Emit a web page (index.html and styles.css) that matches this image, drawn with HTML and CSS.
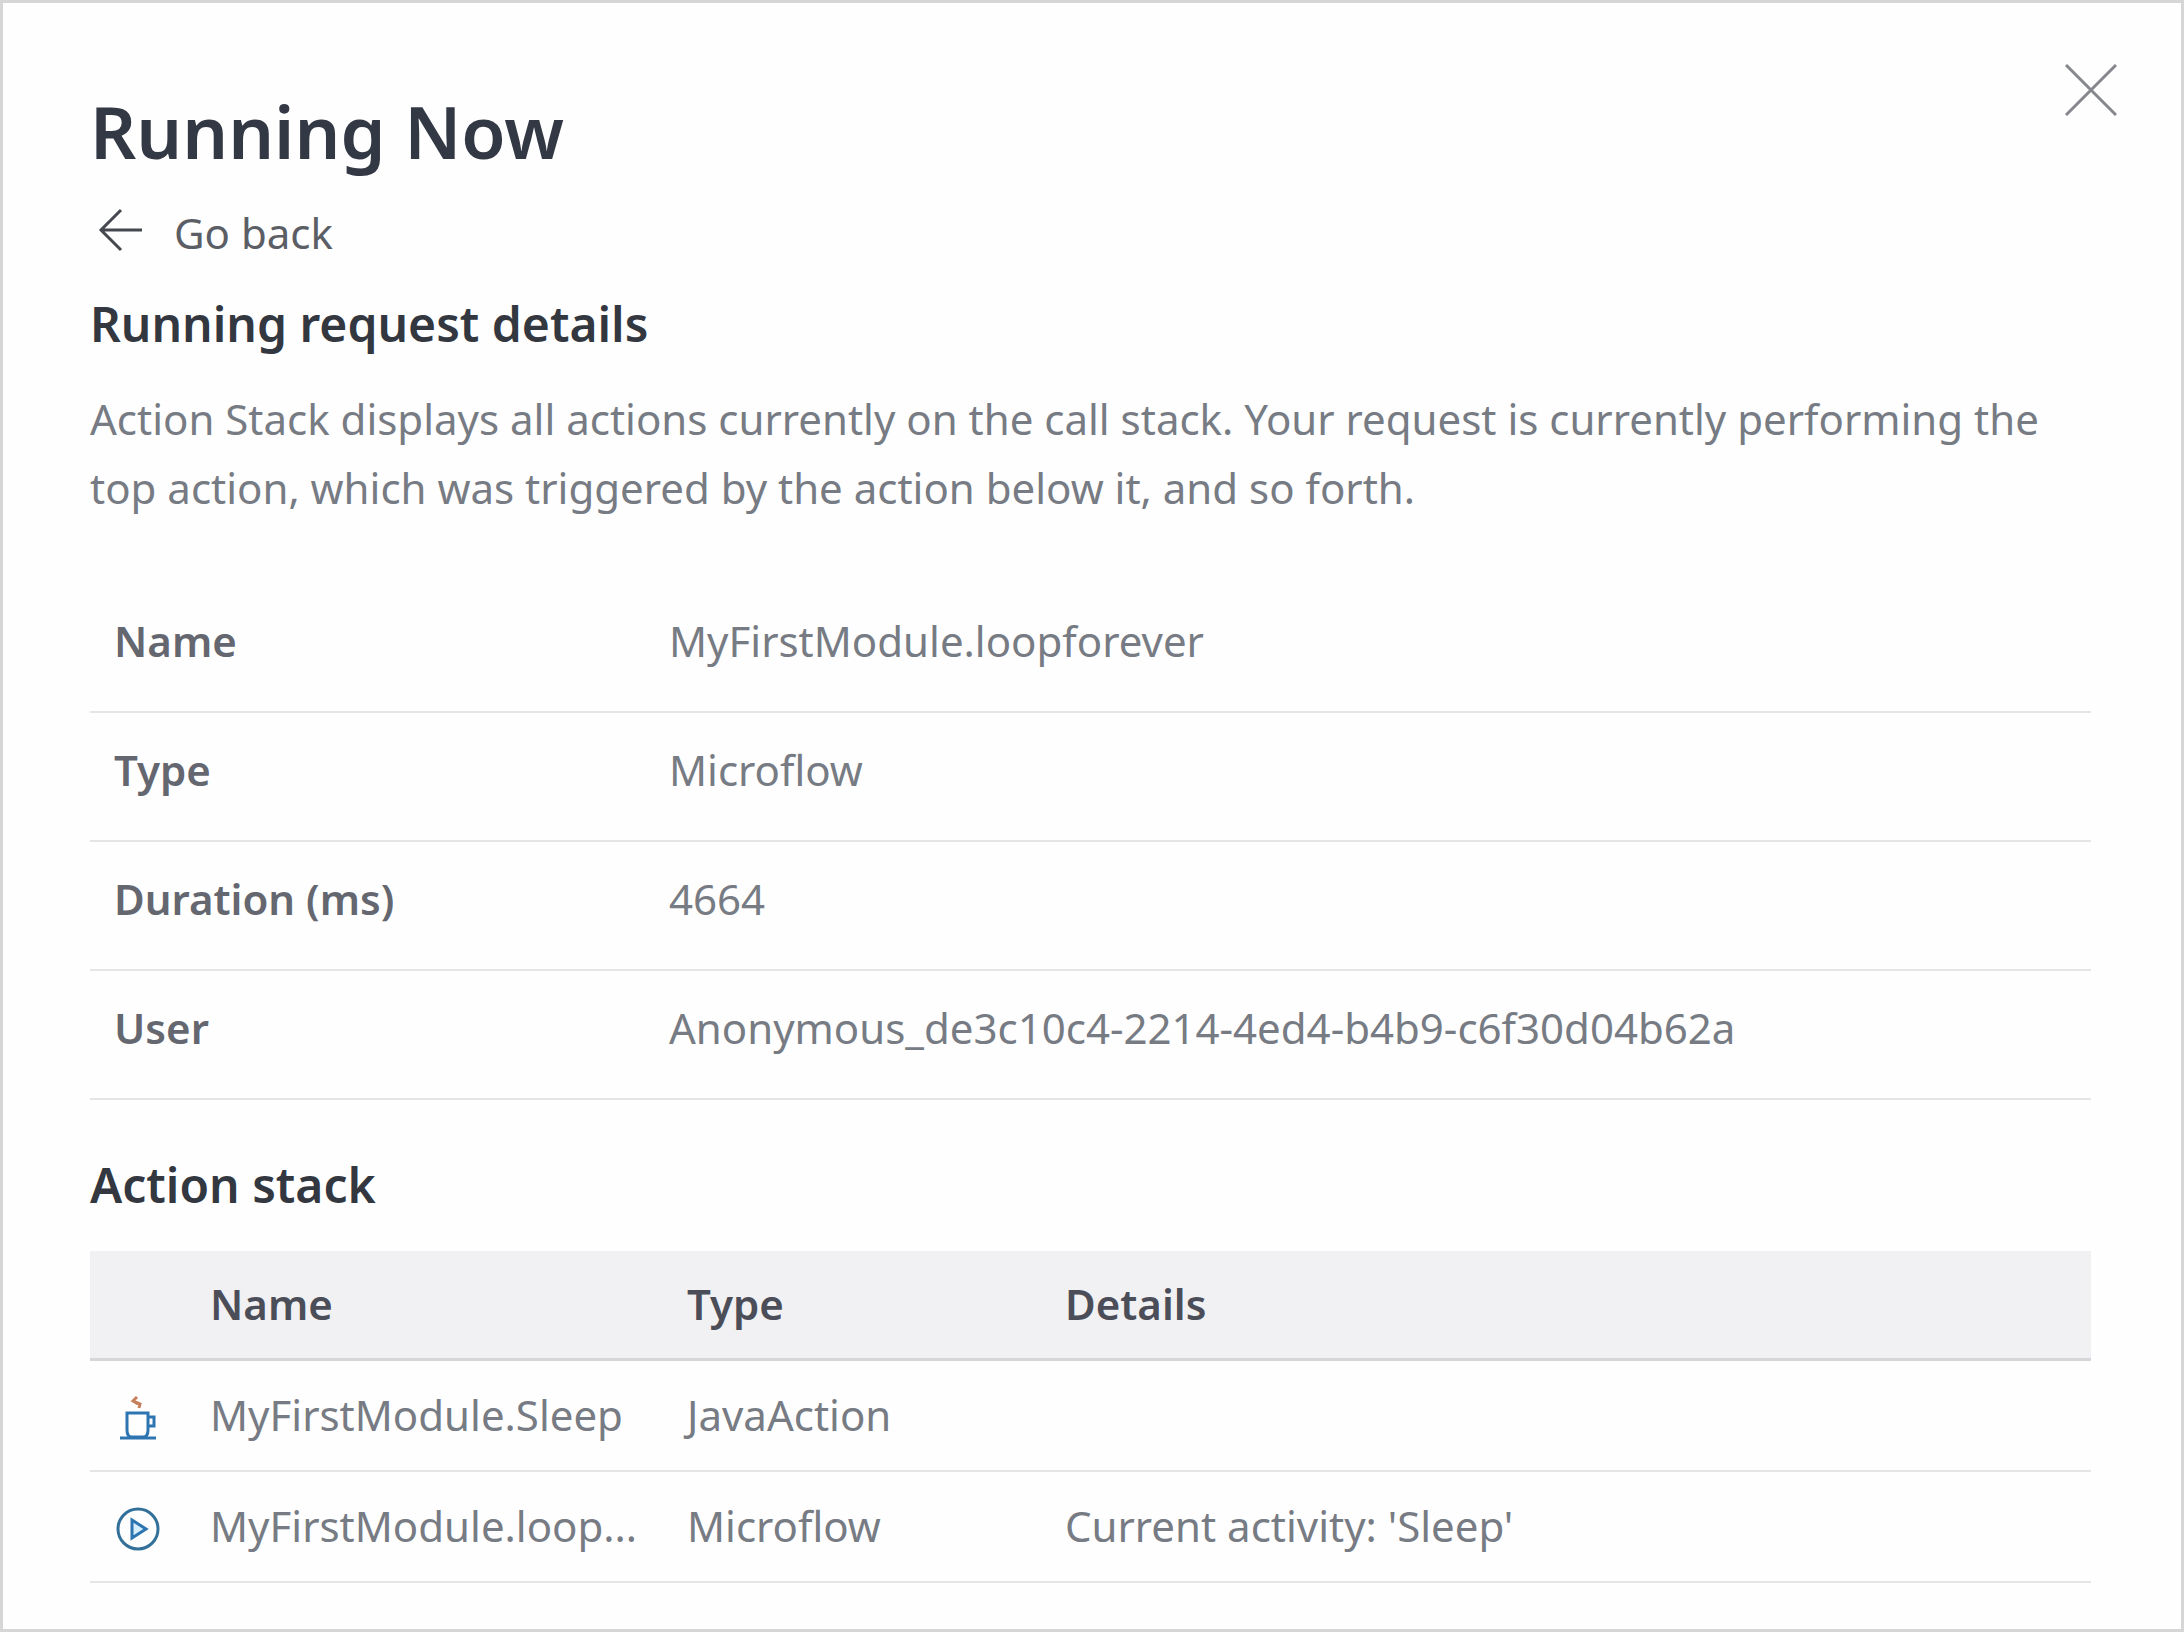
FILE: index.html
```html
<!DOCTYPE html>
<html lang="en">
<head>
<meta charset="utf-8">
<title>Running Now</title>
<link rel="stylesheet" href="styles.css">
</head>
<body>
<main class="dialog">
  <button class="close" type="button" aria-label="Close">
    <svg class="close-icon" viewBox="0 0 52 52" aria-hidden="true"><path d="M1 1L51 51M51 1L1 51"/></svg>
  </button>
  <h1 class="title">Running Now</h1>
  <a class="back" href="#">
    <svg class="back-icon" viewBox="0 0 44 44" aria-hidden="true"><path d="M44 22H3M23 2L3 22L23 42"/></svg>
    <span>Go back</span>
  </a>
  <h2 class="subtitle">Running request details</h2>
  <p class="intro">Action Stack displays all actions currently on the call stack. Your request is currently performing the top action, which was triggered by the action below it, and so forth.</p>

  <table class="details">
    <tbody>
      <tr><th scope="row">Name</th><td>MyFirstModule.loopforever</td></tr>
      <tr><th scope="row">Type</th><td>Microflow</td></tr>
      <tr><th scope="row">Duration (ms)</th><td>4664</td></tr>
      <tr><th scope="row">User</th><td>Anonymous_de3c10c4-2214-4ed4-b4b9-c6f30d04b62a</td></tr>
    </tbody>
  </table>

  <h2 class="subtitle">Action stack</h2>
  <table class="stack">
    <colgroup><col class="col-icon"><col class="col-name"><col class="col-type"><col></colgroup>
    <thead>
      <tr><td></td><th scope="col">Name</th><th scope="col">Type</th><th scope="col">Details</th></tr>
    </thead>
    <tbody>
      <tr>
        <td class="icon-cell">
          <svg class="icon" viewBox="0 0 44 44" aria-hidden="true">
            <path class="steam" d="M21 1L17 5L22 8M19 6L24 8L23 12"/>
            <path class="line" d="M4 42H40M11 17H32V34Q32 41 27 41H16Q11 41 11 34ZM32 21H38V30H32"/>
          </svg>
        </td>
        <td>MyFirstModule.Sleep</td><td>JavaAction</td><td></td>
      </tr>
      <tr>
        <td class="icon-cell">
          <svg class="icon" viewBox="0 0 44 44" aria-hidden="true">
            <circle class="ring" cx="22" cy="22" r="20"/>
            <path class="play" d="M16 13V31L30 22Z"/>
          </svg>
        </td>
        <td>MyFirstModule.loop...</td><td>Microflow</td><td>Current activity: 'Sleep'</td>
      </tr>
    </tbody>
  </table>
</main>
</body>
</html>
```
FILE: styles.css
```css
* { box-sizing: border-box; }

body {
  margin: 0;
  background: #fefefe;
  color: #777b83;
  font: 400 42px/69px "Noto Sans", sans-serif;
}

.dialog {
  position: relative;
  min-height: 100vh;
  padding: 80px 90px 46px 87px;
  border: 3px solid #d6d6d6;
}

.close {
  position: absolute;
  top: 61px;
  right: 64px;
  display: flex;
  padding: 0;
  border: 0;
  background: none;
  cursor: pointer;
}

.close-icon {
  width: 52px;
  height: 52px;
  fill: none;
  stroke: #85878c;
  stroke-width: 3;
}

.title {
  margin: 0 0 18px;
  color: #333845;
  font-size: 72px;
  font-weight: 600;
  line-height: 96px;
}

.back {
  display: flex;
  align-items: center;
  gap: 32px;
  width: fit-content;
  padding-left: 8px;
  color: #5b5e65;
  line-height: 72px;
  text-decoration: none;
}

.back-icon {
  width: 44px;
  height: 44px;
  margin-bottom: 6px;
  fill: none;
  stroke: #45484f;
  stroke-width: 3;
}

.subtitle {
  margin: 22px 0 27px;
  color: #333740;
  font-size: 48px;
  font-weight: 600;
  line-height: 66px;
}

.intro { margin: 0 0 62px; }

table {
  width: 100%;
  border-collapse: separate;
  border-spacing: 0;
  table-layout: fixed;
}

th {
  font-weight: 600;
  text-align: left;
}

.details th,
.details td {
  padding: 22px 24px 36px;
  border-bottom: 2px solid #e5e5e6;
}

.details th {
  width: 555px;
  color: #64676f;
}

.details + .subtitle { margin: 52px 0 33px; }

.col-icon { width: 96px; }
.col-name { width: 477px; }
.col-type { width: 378px; }

.stack th,
.stack td {
  overflow: hidden;
  padding: 19px 24px 21px;
  border-bottom: 2px solid #e5e5e6;
  text-overflow: ellipsis;
  white-space: nowrap;
}

.stack thead th,
.stack thead td {
  padding-top: 18px;
  padding-bottom: 20px;
  border-bottom: 3px solid #d5d6d9;
  background: #f1f1f3;
  color: #4b4e58;
}

.stack .icon-cell { padding-right: 0; }

.icon {
  display: block;
  width: 44px;
  height: 44px;
  margin: 6px 0 0 2px;
  fill: none;
  stroke: #2d75b0;
  stroke-width: 3;
}

.steam { stroke: #c7805c; }
.ring { stroke: #32709a; }
.play { fill: #d5eefc; }
```
